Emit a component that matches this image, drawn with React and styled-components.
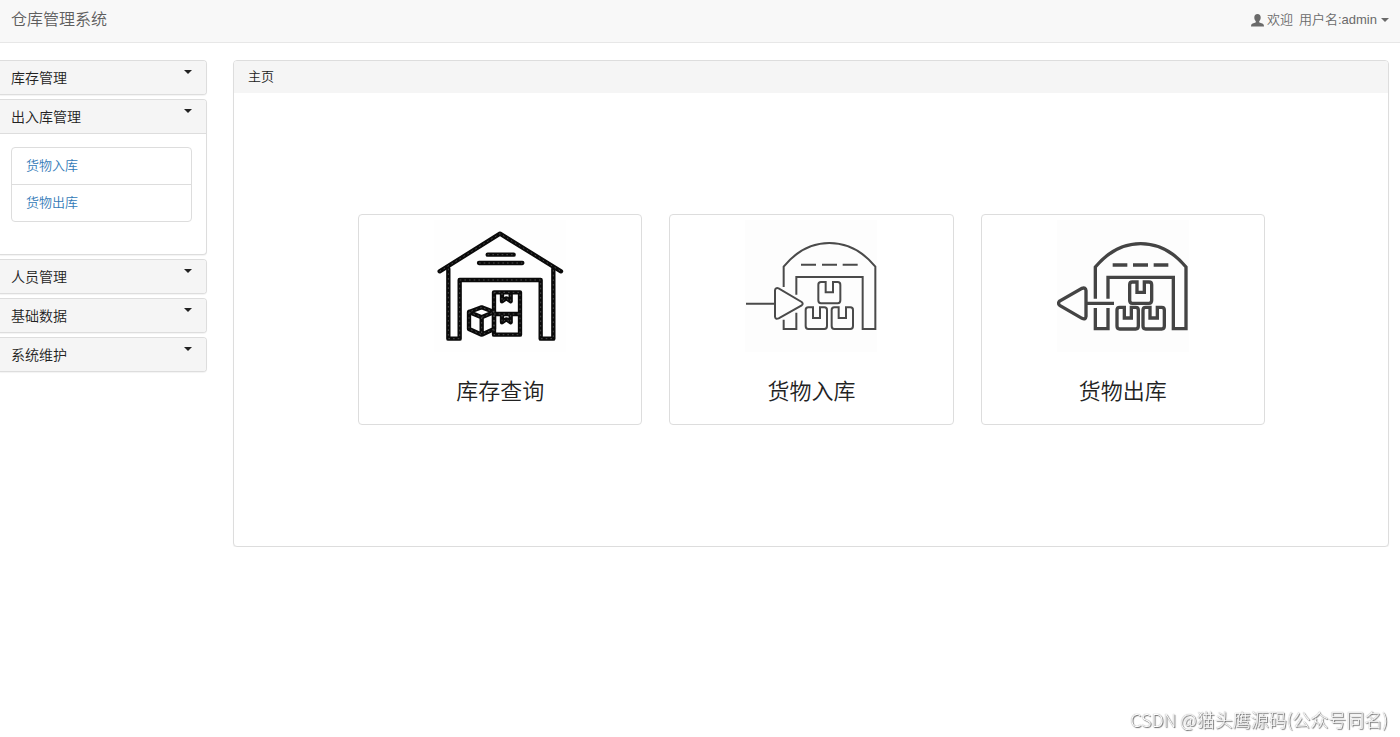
import React, { useState } from 'react'
import styled, { createGlobalStyle, css } from 'styled-components';

const menus = [
    { title: '库存管理', links: [] },
    { title: '出入库管理', links: ['货物入库', '货物出库'] },
    { title: '人员管理', links: [] },
    { title: '基础数据', links: [] },
    { title: '系统维护', links: [] },
];

function UserIcon() {
    return (
        <svg width="13" height="13" viewBox="0 0 13 13" fill="currentColor" aria-hidden="true">
            <path d="M6.5 0C8.6 0 9.7 1.4 9.7 3.4C9.7 5 9 6.4 8.2 7.2V8.3C8.6 9 12.6 9.4 12.8 11L13 12.4H0L.2 11C.4 9.4 4.4 9 4.8 8.3V7.2C4 6.4 3.3 5 3.3 3.4C3.3 1.4 4.4 0 6.5 0Z"/>
        </svg>
    )
}

function WarehouseIcon() {
    const lines = (
        <>
            <path d="M42 184L223 71L406 184"/>
            <path d="M68 176V386H102V210H345V386H383V176"/>
            <path d="M186 134H264M160 159H290"/>
            <path d="M205 247H283V374H205ZM205 312H283"/>
            <path d="M229 250V274L242 265L255 274V250M229 315V337L242 328L255 337V315"/>
            <path d="M168 292L130 306V357L168 374L205 357V306ZM130 306L168 322L205 306M168 322V374"/>
        </>
    )
    return (
        <svg viewBox="25 30 396 396" aria-hidden="true">
            <rect x="25" y="30" width="396" height="396" fill="#fefefe"/>
            <g fill="none" stroke="#0a0a0a" strokeWidth="13" strokeLinejoin="round" strokeLinecap="round">{lines}</g>
            <g fill="none" stroke="#6a6a6a" strokeWidth="2" strokeDasharray="5 9">{lines}</g>
        </svg>
    )
}

function Boxes() {
    return (
        <>
            <path d="M273 216H259Q251 216 251 224V271Q251 280 259 280H309Q317 280 317 271V224Q317 216 309 216H295V247H273Z"/>
            <path d="M235 292H221Q213 292 213 300V348Q213 357 221 357H269Q277 357 277 348V300Q277 292 269 292H256V324H235Z"/>
            <path d="M312 292H299Q291 292 291 300V348Q291 357 299 357H347Q355 357 355 348V300Q355 292 347 292H334V324H312Z"/>
        </>
    )
}

function StockInIcon() {
    return (
        <svg viewBox="31 30 396 396" aria-hidden="true">
            <rect x="31" y="30" width="396" height="396" fill="#fdfdfd"/>
            <g fill="none" stroke="#4a4a4a" strokeWidth="6">
                <path d="M147 231V170Q205 99 284 99Q364 99 422 170V357H384V201H185V254M185 308V357H147V329"/>
                <path d="M199 164H244M262 164H307M324 164H369"/>
                <path d="M34 281H121M121 241V320Q122 329 132 325L201 286Q207 281 201 276L132 235Q122 232 121 241Z"/>
                <Boxes/>
            </g>
        </svg>
    )
}

function StockOutIcon() {
    return (
        <svg viewBox="37 30 396 396" aria-hidden="true">
            <rect x="37" y="30" width="396" height="396" fill="#fdfdfd"/>
            <g fill="none" stroke="#444" strokeWidth="10">
                <path d="M152 266V171Q211 101 288 101Q366 101 424 171V356H386V202H190V266M190 294V356H152V294"/>
                <path d="M204 165H248M265 165H310M327 165H371"/>
                <path d="M208 280H124M124 242Q123 231 112 235L45 273Q38 280 45 286L112 325Q123 330 124 319Z"/>
                <g transform="translate(4 0)"><Boxes/></g>
            </g>
        </svg>
    )
}

const cards = [
    { title: '库存查询', Icon: WarehouseIcon },
    { title: '货物入库', Icon: StockInIcon },
    { title: '货物出库', Icon: StockOutIcon },
];

function App() {
    const [open, setOpen] = useState(1);

    return (
        <>
            <GlobalStyle />
            <Navbar>
                <Brand href="#">仓库管理系统</Brand>
                <UserButton type="button">
                    <UserIcon />
                    <span>欢迎</span>
                    <UserName>用户名:admin</UserName>
                    <Caret />
                </UserButton>
            </Navbar>
            <Layout>
                <Sidebar>
                    {menus.map((menu, i) => (
                        <MenuPanel key={menu.title}>
                            <MenuHeading
                                type="button"
                                aria-expanded={open === i}
                                onClick={() => setOpen(open === i ? -1 : i)}
                            >
                                {menu.title}
                                <Caret />
                            </MenuHeading>
                            {open === i && menu.links.length > 0 && (
                                <MenuBody>
                                    <LinkList>
                                        {menu.links.map(link => (
                                            <li key={link}><a href="#">{link}</a></li>
                                        ))}
                                    </LinkList>
                                </MenuBody>
                            )}
                        </MenuPanel>
                    ))}
                </Sidebar>
                <MainPanel>
                    <PanelHeading>主页</PanelHeading>
                    <CardRow>
                        {cards.map(({ title, Icon }) => (
                            <Card href="#" key={title}>
                                <Icon />
                                <h3>{title}</h3>
                            </Card>
                        ))}
                    </CardRow>
                </MainPanel>
            </Layout>
            <Watermark>CSDN @猫头鹰源码(公众号同名)</Watermark>
        </>
    )
}

const GlobalStyle = createGlobalStyle`
    *{
        box-sizing: border-box;
    }
    body{
        margin: 0;
        background: #fff;
        color: #222;
        font-family: "Liberation Sans", "Noto Sans CJK SC", sans-serif;
        font-size: 13px;
        font-weight: 350;
        line-height: 18px;
    }
    a{
        color: #337ab7;
        text-decoration: none;
    }
    button{
        font: inherit;
        color: inherit;
        cursor: pointer;
    }
`;

const panel = css`
    background: #fff;
    border: 1px solid #ddd;
    border-radius: 4px;
    box-shadow: 0 1px 1px rgba(0, 0, 0, .05);
`;

const Caret = styled.span`
    border-top: 4px solid;
    border-left: 4px solid transparent;
    border-right: 4px solid transparent;
`;

const Navbar = styled.nav`
    display: flex;
    justify-content: space-between;
    align-items: center;
    height: 43px;
    padding: 0 11px 2px;
    background: #f8f8f8;
    border-bottom: 1px solid #e7e7e7;
`;

const Brand = styled.a`
    color: #5e5e5e;
    font-size: 16px;
`;

const UserButton = styled.button`
    display: flex;
    align-items: center;
    gap: 3px;
    padding: 0;
    border: 0;
    background: none;
    color: #6a6a6a;
`;

const UserName = styled.span`
    padding: 0 1px 0 3px;
`;

const Layout = styled.div`
    display: flex;
    align-items: flex-start;
    gap: 26px;
    padding: 17px 11px 0 0;
`;

const Sidebar = styled.aside`
    display: flex;
    flex-direction: column;
    flex: 0 0 207px;
    gap: 4px;
`;

const MenuPanel = styled.section`
    ${panel}
    border-left: 0;
    border-radius: 0 4px 4px 0;
    overflow: hidden;
`;

const MenuHeading = styled.button`
    display: flex;
    justify-content: space-between;
    width: 100%;
    padding: 8px 14px 7px 11px;
    border: 0;
    background: #f5f5f5;
    font-size: 14px;
    text-align: left;

    ${Caret}{
        align-self: flex-start;
        margin-top: 1px;
    }
`;

const MenuBody = styled.div`
    padding: 13px 14px 32px 11px;
    border-top: 1px solid #ddd;
`;

const LinkList = styled.ul`
    margin: 0;
    padding: 0;
    list-style: none;
    border: 1px solid #ddd;
    border-radius: 4px;

    li + li{
        border-top: 1px solid #ddd;
    }
    a{
        display: block;
        padding: 9px 14px;
    }
`;

const MainPanel = styled.main`
    ${panel}
    flex: 1;
    min-width: 0;
`;

const PanelHeading = styled.div`
    padding: 7px 14px;
    background: #f5f5f5;
    border-radius: 3px 3px 0 0;
`;

const CardRow = styled.div`
    display: grid;
    grid-template-columns: repeat(3, 1fr);
    gap: 27px;
    padding: 121px 123px 121px 124px;
`;

const Card = styled.a`
    display: flex;
    flex-direction: column;
    align-items: center;
    padding: 5px 5px 20px;
    border: 1px solid #ddd;
    border-radius: 4px;
    color: #222;

    svg{
        width: 132px;
        height: 132px;
    }
    h3{
        margin: 28px 0 0;
        font-size: 22px;
        font-weight: 350;
        line-height: 24px;
    }
`;

const Watermark = styled.div`
    position: fixed;
    right: 12px;
    bottom: 6px;
    color: #fff;
    font-family: "Noto Sans CJK SC", sans-serif;
    font-size: 18px;
    font-weight: 300;
    line-height: 24px;
    text-shadow: 0 0 1px #777, 1px 1px 1px #666;
`;

export default App;
